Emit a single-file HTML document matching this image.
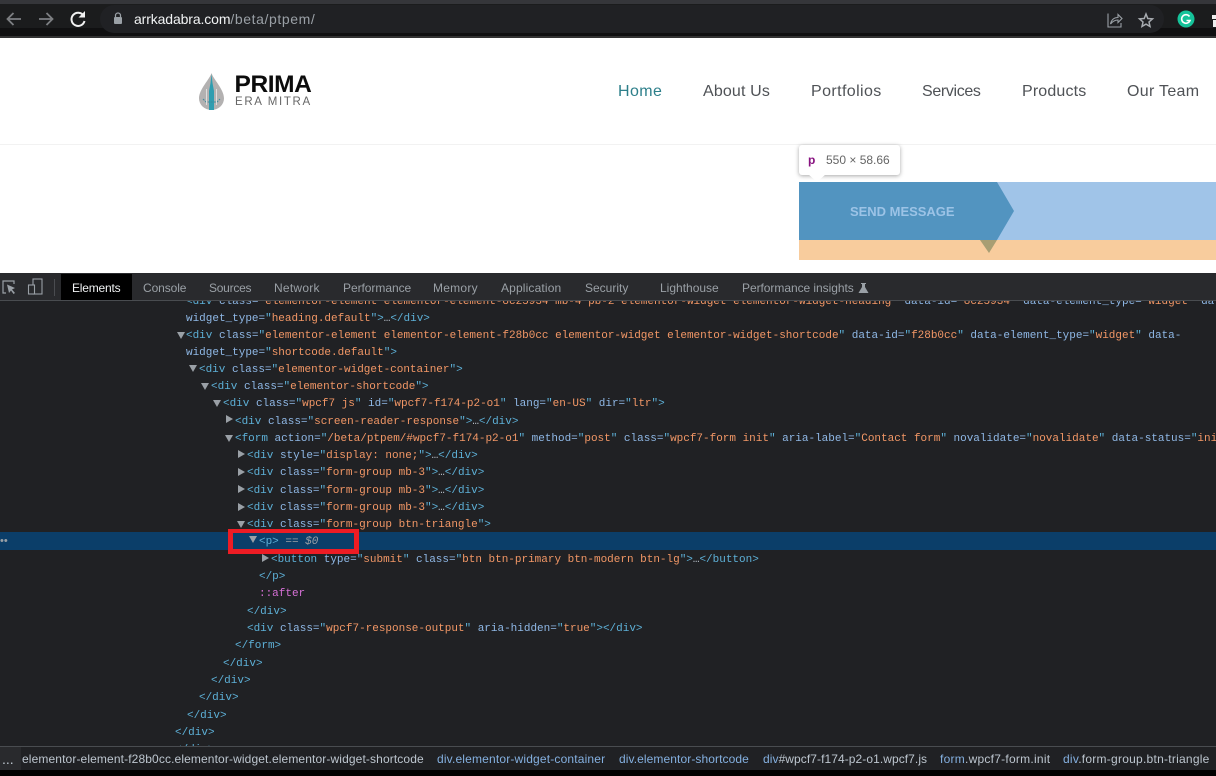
<!DOCTYPE html>
<html><head><meta charset="utf-8"><style>
*{box-sizing:border-box}
html,body{margin:0;padding:0;width:1216px;height:776px;overflow:hidden;background:#fff;font-family:"Liberation Sans",sans-serif}
.a{position:absolute;white-space:pre}
.nav{font-size:16px;color:#4f5256;top:82px;line-height:20px}
.tab{font-size:12px;color:#9aa0a6;top:281px;line-height:15px}
.l{position:absolute;white-space:pre;font:11px/17px "Liberation Mono",monospace;letter-spacing:-.01px;color:#5db0d7}
.l i{font-style:normal;color:#8fb8e6}
.l b{font-weight:normal;color:#f29766}
.l u{text-decoration:none;color:#bdc6cf}
.tri{position:absolute;width:0;height:0;border-left:4px solid transparent;border-right:4px solid transparent;border-top:7px solid #9aa0a6}
.trr{position:absolute;width:0;height:0;border-top:4px solid transparent;border-bottom:4px solid transparent;border-left:7px solid #9aa0a6}
.bc{position:absolute;top:752px;font-size:12px;line-height:15px;color:#84b0e0;white-space:pre}
.bc em{font-style:normal;color:#bdc6cf}
</style></head><body>
<div class="a" style="left:0;top:0;width:1216px;height:38px;background:#1b1c1d"></div>
<div class="a" style="left:0;top:0;width:1216px;height:4px;background:#35363a"></div>
<div class="a" style="left:0;top:28px;width:1216px;height:10px;background:#101011"></div>
<div class="a" style="left:0;top:36px;width:1216px;height:2px;background:#333"></div>
<div class="a" style="left:100px;top:5px;width:1064px;height:28px;border-radius:14px;background:#202124"></div>
<svg class="a" style="left:0;top:0" width="130" height="38" fill="none">
<path d="M21 19H8M13.5 13 7.500 19 13.500 25" stroke="#7d7f82" stroke-width="1.800"/>
<path d="M39 19H52M46.500 13 52.500 19 46.500 25" stroke="#7d7f82" stroke-width="1.800"/>
<path d="M83.500 15.500A6.600 6.600 0 1 0 84.500 21" stroke="#f1f1f1" stroke-width="2"/><path d="M85 11V17.500H78.500Z" fill="#f1f1f1"/>
<rect x="114" y="17" width="8" height="7" rx="1" fill="#9aa0a6"/><path d="M115.500 17V15.500A2.500 2.500 0 0 1 120.500 15.500V17" stroke="#9aa0a6" stroke-width="1.200"/>
</svg>
<div class="a" style="left:134px;top:11px;font-size:14px;line-height:17px;color:#f1f3f4;letter-spacing:-.12px">arrkadabra.com<span style="color:#9aa0a6;letter-spacing:.6px">/beta/ptpem/</span></div>
<svg class="a" style="left:1100px;top:5px" width="116" height="28" fill="none">
<path d="M7.500 9H8V22H21V18" stroke="#9aa0a6" stroke-width="1.100"/><path d="M10.500 19C11.500 14.500 14.500 12.500 18 12.500V9.500L22 13.500 18 17.500V15C15 15 12.500 16.500 10.500 19Z" stroke="#9aa0a6" stroke-width="1.100"/>
<path d="M46 9 47.800 13.500 52.500 13.900 49 17 50 21.500 46 19.100 42 21.500 43 17 39.500 13.900 44.200 13.500Z" stroke="#a8acb1" stroke-width="1.500"/>
<circle cx="86" cy="14" r="8.500" fill="#15c39a"/><path d="M89.500 11.500A4.300 4.300 0 1 0 90 15.500H86.500" stroke="#fff" stroke-width="1.600"/>
<rect x="112" y="10" width="4" height="4" fill="#eee"/><rect x="113" y="15" width="3" height="7" fill="#eee"/>
</svg>

<div class="a" style="left:0;top:144px;width:1216px;height:1px;background:#f2f2f2"></div>
<svg class="a" style="left:197px;top:71px" width="30" height="41">
<path d="M14.500 2C13 8 2 18 2 27.500A12.500 11.500 0 0 0 27 27.500C27 18 16 8 14.500 2Z" fill="#b3b1b1"/>
<path d="M12 39V20L13.500 12 14.500 3 15.500 12 17 20V39Z" fill="#2f9db0"/>
<path d="M6 28 9 31H20L23 28" stroke="#3d8a9a" stroke-width="1" fill="none" stroke-dasharray="2 1"/>
<path d="M9.500 18V34M19.500 18V34" stroke="#dedede" stroke-width="1"/>
</svg>
<div class="a" style="left:234.500px;top:70px;font-size:24.500px;line-height:29px;font-weight:bold;color:#0c0c0c;letter-spacing:-.4px">PRIMA</div>
<div class="a" style="left:235px;top:96px;font-size:11.500px;line-height:13px;color:#666;letter-spacing:1.650px">ERA MITRA</div>
<div class="a nav" style="left:618px;color:#2d7f8a;letter-spacing:.4px">Home</div>
<div class="a nav" style="left:703px;letter-spacing:.15px">About Us</div>
<div class="a nav" style="left:811px;letter-spacing:.4px">Portfolios</div>
<div class="a nav" style="left:922px;letter-spacing:-.35px">Services</div>
<div class="a nav" style="left:1022px;letter-spacing:.15px">Products</div>
<div class="a nav" style="left:1127px;letter-spacing:.3px">Our Team</div>

<div class="a" style="left:799px;top:182px;width:417px;height:58px;background:#a0c4e8"></div>
<div class="a" style="left:799px;top:240px;width:417px;height:20px;background:#f8cc9d"></div>
<svg class="a" style="left:799px;top:182px" width="230" height="75">
<path d="M0 0H198L215 29 198 58H0Z" fill="#5294c0"/>
<path d="M181 58H198L190 71Z" fill="#a89e73"/>
</svg>
<div class="a" style="left:850px;top:204px;font-size:13px;line-height:16px;font-weight:bold;color:#9cc3e6;letter-spacing:-.02px">SEND MESSAGE</div>
<div class="a" style="left:799px;top:145px;width:101px;height:30px;background:#fff;border-radius:3px;box-shadow:0 1px 4px rgba(0,0,0,.35)"></div>
<svg class="a" style="left:808px;top:174px" width="20" height="9"><path d="M0 0H18L9 8Z" fill="#fff"/></svg>
<div class="a" style="left:808px;top:153px;font-size:12px;line-height:15px;font-weight:bold;color:#881280">p</div>
<div class="a" style="left:826px;top:153px;font-size:12px;line-height:15px;color:#666">550 × 58.66</div>

<div class="a" style="left:0;top:273px;width:1216px;height:27px;background:#292a2d"></div>
<div class="a" style="left:0;top:300px;width:1216px;height:1px;background:#494c50;z-index:3"></div>
<div class="a" style="left:0;top:301px;width:1216px;height:445px;background:#202124"></div>
<div class="a" style="left:61px;top:274px;width:71px;height:26px;background:#000"></div>
<svg class="a" style="left:0;top:278px" width="56" height="20" fill="none">
<path d="M6 15H3V3H14V6" stroke="#9aa0a6" stroke-width="1.200"/><path d="M7 6.500 15 10 12 11.500 15 15 13.500 16 11 12.500 9 15Z" fill="#9aa0a6"/>
<rect x="33" y="1" width="9" height="15" stroke="#9aa0a6" stroke-width="1.100"/><rect x="28.500" y="7" width="6" height="9" fill="#292a2d" stroke="#9aa0a6" stroke-width="1.100"/>
<path d="M54.500 1V18" stroke="#4a4c50"/>
</svg>
<div class="a tab" style="left:72px;color:#f1f3f4;letter-spacing:-.2px">Elements</div>
<div class="a tab" style="left:143px;letter-spacing:-.1px">Console</div>
<div class="a tab" style="left:209px;letter-spacing:-.25px">Sources</div>
<div class="a tab" style="left:274px;letter-spacing:.25px">Network</div>
<div class="a tab" style="left:343px;letter-spacing:-.05px">Performance</div>
<div class="a tab" style="left:433px;letter-spacing:.25px">Memory</div>
<div class="a tab" style="left:501px;letter-spacing:.15px">Application</div>
<div class="a tab" style="left:585px">Security</div>
<div class="a tab" style="left:660px">Lighthouse</div>
<div class="a tab" style="left:742px;letter-spacing:-.05px">Performance insights</div>
<svg class="a" style="left:858px;top:282px" width="11" height="12"><path d="M3 1H8V2H7V5L10.500 11H.5L4 5V2H3Z" fill="#9aa0a6"/></svg>

<div class="a" style="left:0;top:301px;width:1216px;height:445px;overflow:hidden">
<div class="a" style="left:0;top:231px;width:1216px;height:18px;background:#0b3e69"></div>
<div class="a" style="left:0;top:236px;color:#9aa0a6;font-size:11px;line-height:8px">••</div>
<div class="a" style="left:0;top:1px;width:1216px;height:445px">
<div class="l" style="left:186px;top:-8px">&lt;div <i>class=</i>"<b>elementor-element elementor-element-8c25934 mb-4 pb-2 elementor-widget elementor-widget-heading</b>" <i>data-id=</i>"<b>8c25934</b>" <i>data-element_type=</i>"<b>widget</b>" <i>data-widget_type=</i>"<b>heading</b></div>
<div class="l" style="left:186px;top:9px"><i>widget_type=</i>"<b>heading.default</b>"&gt;<u>…</u>&lt;/div&gt;</div>
<div class="tri" style="left:177px;top:30px"></div>
<div class="l" style="left:186px;top:26px">&lt;div <i>class=</i>"<b>elementor-element elementor-element-f28b0cc elementor-widget elementor-widget-shortcode</b>" <i>data-id=</i>"<b>f28b0cc</b>" <i>data-element_type=</i>"<b>widget</b>" <i>data-</i></div>
<div class="l" style="left:186px;top:43px"><i>widget_type=</i>"<b>shortcode.default</b>"&gt;</div>
<div class="tri" style="left:189px;top:63px"></div>
<div class="l" style="left:199px;top:60px">&lt;div <i>class=</i>"<b>elementor-widget-container</b>"&gt;</div>
<div class="tri" style="left:201px;top:81px"></div>
<div class="l" style="left:211px;top:77px">&lt;div <i>class=</i>"<b>elementor-shortcode</b>"&gt;</div>
<div class="tri" style="left:213px;top:98px"></div>
<div class="l" style="left:223px;top:94px">&lt;div <i>class=</i>"<b>wpcf7 js</b>" <i>id=</i>"<b>wpcf7-f174-p2-o1</b>" <i>lang=</i>"<b>en-US</b>" <i>dir=</i>"<b>ltr</b>"&gt;</div>
<div class="trr" style="left:226px;top:113px"></div>
<div class="l" style="left:235px;top:112px">&lt;div <i>class=</i>"<b>screen-reader-response</b>"&gt;<u>…</u>&lt;/div&gt;</div>
<div class="tri" style="left:225px;top:133px"></div>
<div class="l" style="left:235px;top:129px">&lt;form <i>action=</i>"<b>/beta/ptpem/#wpcf7-f174-p2-o1</b>" <i>method=</i>"<b>post</b>" <i>class=</i>"<b>wpcf7-form init</b>" <i>aria-label=</i>"<b>Contact form</b>" <i>novalidate=</i>"<b>novalidate</b>" <i>data-status=</i>"<b>init</b></div>
<div class="trr" style="left:238px;top:148px"></div>
<div class="l" style="left:247px;top:146px">&lt;div <i>style=</i>"<b>display: none;</b>"&gt;<u>…</u>&lt;/div&gt;</div>
<div class="trr" style="left:238px;top:166px"></div>
<div class="l" style="left:247px;top:163px">&lt;div <i>class=</i>"<b>form-group mb-3</b>"&gt;<u>…</u>&lt;/div&gt;</div>
<div class="trr" style="left:238px;top:183px"></div>
<div class="l" style="left:247px;top:181px">&lt;div <i>class=</i>"<b>form-group mb-3</b>"&gt;<u>…</u>&lt;/div&gt;</div>
<div class="trr" style="left:238px;top:201px"></div>
<div class="l" style="left:247px;top:198px">&lt;div <i>class=</i>"<b>form-group mb-3</b>"&gt;<u>…</u>&lt;/div&gt;</div>
<div class="tri" style="left:237px;top:219px"></div>
<div class="l" style="left:247px;top:215px">&lt;div <i>class=</i>"<b>form-group btn-triangle</b>"&gt;</div>
<div class="tri" style="left:249px;top:234px"></div>
<div class="l" style="left:259px;top:232px">&lt;p&gt; <u style="color:#9aa0a6">== <span style="font-style:italic">$0</span></u></div>
<div class="trr" style="left:262px;top:252px"></div>
<div class="l" style="left:271px;top:250px">&lt;button <i>type=</i>"<b>submit</b>" <i>class=</i>"<b>btn btn-primary btn-modern btn-lg</b>"&gt;<u>…</u>&lt;/button&gt;</div>
<div class="l" style="left:259px;top:267px">&lt;/p&gt;</div>
<div class="l" style="left:259px;top:284px;color:#d670d6">::after</div>
<div class="l" style="left:247px;top:302px">&lt;/div&gt;</div>
<div class="l" style="left:247px;top:319px">&lt;div <i>class=</i>"<b>wpcf7-response-output</b>" <i>aria-hidden=</i>"<b>true</b>"&gt;&lt;/div&gt;</div>
<div class="l" style="left:235px;top:336px">&lt;/form&gt;</div>
<div class="l" style="left:223px;top:354px">&lt;/div&gt;</div>
<div class="l" style="left:211px;top:371px">&lt;/div&gt;</div>
<div class="l" style="left:199px;top:388px">&lt;/div&gt;</div>
<div class="l" style="left:187px;top:406px">&lt;/div&gt;</div>
<div class="l" style="left:175px;top:423px">&lt;/div&gt;</div>
<div class="l" style="left:175px;top:440px">&lt;/div&gt;</div>
</div>
</div>

<div class="a" style="left:228px;top:529px;width:131px;height:25px;border:solid #ed1c24;border-width:4px 5px 5px 5px"></div>

<div class="a" style="left:0;top:746px;width:1216px;height:24px;background:#202124;border-top:1px solid #494c50"></div>
<div class="a" style="left:0;top:747px;width:21px;height:23px;background:#292a2d"></div>
<div class="a" style="left:0;top:770px;width:1216px;height:6px;background:#000"></div>
<div class="a" style="left:2px;top:751px;font-size:14px;line-height:16px;color:#bdc6cf">...</div>
<div class="bc" style="left:22px;letter-spacing:.12px"><em>elementor-element-f28b0cc.elementor-widget.elementor-widget-shortcode</em></div>
<div class="bc" style="left:437px;letter-spacing:.17px">div.elementor-widget-container</div>
<div class="bc" style="left:619px;letter-spacing:.09px">div.elementor-shortcode</div>
<div class="bc" style="left:763px;letter-spacing:.07px">div<em>#wpcf7-f174-p2-o1.wpcf7.js</em></div>
<div class="bc" style="left:940px;letter-spacing:.25px">form<em>.wpcf7-form.init</em></div>
<div class="bc" style="left:1063px;letter-spacing:.25px">div<em>.form-group.btn-triangle</em></div>
</body></html>
